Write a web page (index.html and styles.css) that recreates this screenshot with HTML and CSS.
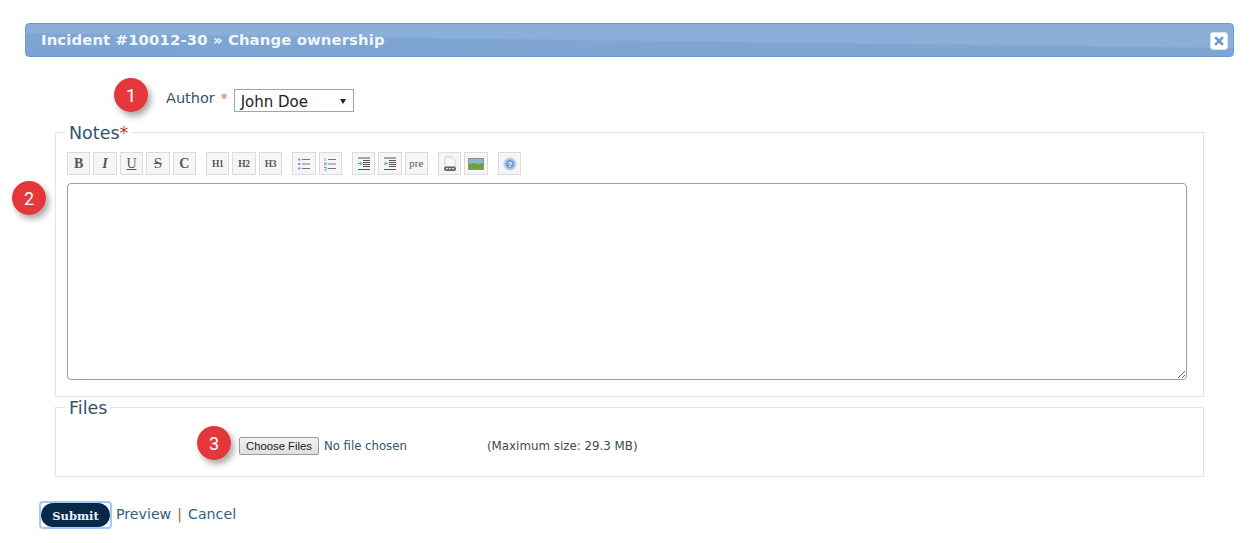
FILE: index.html
```html
<!DOCTYPE html>
<html lang="en">
<head>
<meta charset="utf-8">
<title>Change ownership</title>
<link rel="stylesheet" href="styles.css">
</head>
<body>
<main class="page">
  <header class="titlebar">
    <h1 class="title">Incident #10012-30 » Change ownership</h1>
    <button class="close" aria-label="Close">
      <svg width="10" height="10" viewBox="0 0 10 10"><path d="M2 2l6 6M8 2l-6 6" stroke="#6d9bd0" stroke-width="2.6" stroke-linecap="square"/></svg>
    </button>
  </header>

  <div class="author-row">
    <span class="badge badge-1">1</span>
    <label class="author-label">Author <span class="req-light">*</span></label>
    <div class="select"><span>John Doe</span><i class="caret"></i></div>
  </div>

  <fieldset class="box notes">
    <legend class="legend">Notes<span class="req">*</span></legend>
    <span class="badge badge-2">2</span>
    <div class="toolbar">
      <div class="tgroup">
        <button class="tool serif-b">B</button>
        <button class="tool serif-i">I</button>
        <button class="tool serif-u">U</button>
        <button class="tool serif-s">S</button>
        <button class="tool serif-b">C</button>
      </div>
      <div class="tgroup">
        <button class="tool small">H1</button>
        <button class="tool small">H2</button>
        <button class="tool small">H3</button>
      </div>
      <div class="tgroup">
        <button class="tool"><svg width="14" height="14" viewBox="0 0 14 14"><path d="M5 2.500h8M5 7h8M5 11.500h8" stroke="#777" stroke-width="1.200"/><path d="M1 1.500h2.500v2H1zM1 6h2.500v2H1zM1 10.500h2.500v2H1z" fill="#6fa3e0"/></svg></button>
        <button class="tool"><svg width="14" height="14" viewBox="0 0 14 14"><path d="M5 2.500h8M5 7h8M5 11.500h8" stroke="#777" stroke-width="1.200"/><path d="M2 1v3M1 6h2.500v1H1.500v1h2M1 10.500h2.500v2.500H1" stroke="#6fa3e0" fill="none"/></svg></button>
      </div>
      <div class="tgroup">
        <button class="tool"><svg width="12" height="14" viewBox="0 0 12 14"><path d="M0 1h12M5 3.500h7M5 5.500h7M5 7.500h7M5 9.500h7M0 12.500h12" stroke="#555" stroke-width="1.200"/><path d="M0 6.500h3M2 4.500l2 2-2 2" stroke="#3d9bd9" fill="none"/></svg></button>
        <button class="tool"><svg width="12" height="14" viewBox="0 0 12 14"><path d="M0 1h12M5 3.500h7M5 5.500h7M5 7.500h7M5 9.500h7M0 12.500h12" stroke="#555" stroke-width="1.200"/><path d="M4 6.500H1M2 4.500l-2 2 2 2" stroke="#3d9bd9" fill="none"/></svg></button>
        <button class="tool small pre">pre</button>
      </div>
      <div class="tgroup">
        <button class="tool"><svg width="14" height="16" viewBox="0 0 14 16"><path d="M2 1h7l3 3v7H2z" fill="#f7f7f7" stroke="#cfcfcf"/><rect x="1" y="10.500" width="12" height="4.500" rx="2" fill="#666"/><path d="M3 12.700h8" stroke="#ddd" stroke-width="1.200" stroke-dasharray="2 1"/></svg></button>
        <button class="tool"><svg width="16" height="12" viewBox="0 0 16 12"><rect x="0.500" y="0.500" width="15" height="11" fill="#8fb6d6" stroke="#8a8f94"/><path d="M1 6l5-1 4 1 5-1v6H1z" fill="#6aa52f"/></svg></button>
      </div>
      <div class="tgroup">
        <button class="tool"><svg width="14" height="14" viewBox="0 0 16 16"><circle cx="8" cy="8" r="7" fill="#a9c5e6" stroke="#c4d7ee"/><circle cx="8" cy="8" r="4.500" fill="#6f9bd0"/><text x="8" y="11" text-anchor="middle" class="help-q">?</text></svg></button>
      </div>
    </div>
    <textarea class="notes-area"></textarea>
  </fieldset>

  <fieldset class="box files">
    <legend class="legend">Files</legend>
    <div class="file-row">
      <span class="badge badge-3">3</span>
      <button class="choose">Choose Files</button>
      <span class="nofile">No file chosen</span>
      <span class="maxsize">(Maximum size: 29.3 MB)</span>
    </div>
  </fieldset>

  <div class="actions">
    <div class="submit-focus"><button class="submit">Submit</button></div>
    <a class="link" href="#">Preview</a>
    <span class="sep">|</span>
    <a class="link" href="#">Cancel</a>
  </div>
</main>
</body>
</html>
```

FILE: styles.css
```css
* { box-sizing: border-box; }
html, body { margin: 0; padding: 0; background: #fff; }
body { font-family: "DejaVu Sans", Verdana, sans-serif; color: #2f4f67; overflow: hidden; }
.page { position: relative; width: 1260px; height: 543px; padding: 23px 26px 0 25px; }

.titlebar {
  height: 34px; display: flex; align-items: center; justify-content: space-between;
  padding: 0 5px 0 15px; border: 1px solid #6f9cce; border-radius: 4px;
  background: linear-gradient(180.7deg, #8bafd9 0%, #8bafd9 49%, #7fa6d3 53%, #7ba3d1 100%);
}
.title { margin: 0 0 2px; font-size: 14.8px; font-weight: 700; color: #f2f6fb; letter-spacing: 0.15px; }
.close {
  width: 18px; height: 18px; padding: 0; display: flex; align-items: center; justify-content: center;
  background: #fff; border: 1px solid #d5e0ee; border-radius: 3px; margin-top: 1px;
}

.badge {
  position: absolute; width: 34px; height: 34px; border-radius: 50%;
  display: flex; align-items: center; justify-content: center;
  font: 18px "Roboto", "Liberation Sans", sans-serif; color: #fff;
  background: radial-gradient(circle at 50% 55%, #e43a3e 0%, #e3363a 70%, #f8141c 100%);
  box-shadow: 3px 4px 6px rgba(0,0,0,.35);
}
.badge-1 { left: 114px; top: 78px; }
.badge-2 { left: 12px; top: 181px; }
.badge-3 { left: 197px; top: 426px; }

.author-row { height: 75px; padding: 32px 0 0 141px; display: flex; align-items: flex-start; }
.author-label { font-size: 14.5px; color: #34536b; padding-top: 1px; margin-right: 6px; white-space: nowrap; }
.req-light { color: #e5754a; margin-left: 1px; }
.select {
  width: 120px; height: 23px; padding: 3px 6px 1px; display: flex; align-items: center; justify-content: space-between;
  border: 1px solid #8fa9c4; font-size: 15px; color: #222; background: #fff;
}
.caret { width: 0; height: 0; border: 3px solid transparent; border-top: 5px solid #222; border-bottom: 0; margin-right: 1px; }

.box { margin: 0 30px 0 30px; padding: 0; border: 1px solid #e4e4e4; min-width: 0; }
.legend { margin-left: 10px; padding: 2px 3px 0; font-size: 17.5px; line-height: 17px; color: #34536b; }
.req { color: #c0392b; }
.notes { height: 274px; padding-top: 10px; margin-top: -9px; }
.files { height: 79px; margin-top: 1px; }

.toolbar { display: flex; gap: 10px; height: 23px; margin-left: 11px; }
.tgroup { display: flex; gap: 3px; }
.tool {
  width: 23.4px; height: 23px; padding: 0; display: flex; align-items: center; justify-content: center;
  background: #f6f6f6; border: 1px solid #dcdcdc; color: #555;
  font: 700 14px "Liberation Serif", serif;
}
.serif-i { font-style: italic; }
.serif-u { font-weight: 400; text-decoration: underline; }
.serif-s { font-weight: 400; text-decoration: line-through; font-size: 15px; }
.small { font-size: 9.500px; letter-spacing: -0.3px; }
.pre { font-size: 10.500px; font-weight: 400; letter-spacing: 0.3px; }
.help-q { font: 700 9px "Liberation Sans", sans-serif; fill: #fff; }

.notes-area {
  display: block; width: 1120px; height: 197px; margin: 8px 0 0 11px; padding: 4px;
  border: 1px solid #8aa5bd; border-radius: 4px; background: #fff; resize: both; outline: 0;
}

.file-row { display: flex; align-items: center; height: 44px; padding: 0 0 0 183px; font-size: 11.7px; color: #34536b; margin-top: 7px; }
.choose {
  width: 80px; height: 18px; padding: 0; border: 1px solid #9a9a9a; border-radius: 2px;
  background: linear-gradient(#f3f3f3, #dedede); font: 11.3px "Liberation Sans", sans-serif; color: #222;
}
.nofile { margin-left: 5px; width: 163px; }
.maxsize { white-space: nowrap; color: #3a4a55; font-size: 11.85px; }

.actions { display: flex; align-items: center; margin-top: 24px; margin-left: 14px; font-size: 14.2px; }
.submit-focus { width: 73px; height: 28px; padding: 0; border: 2px solid #a5c9f3; border-radius: 4px; margin-right: 4px; }
.submit {
  display: block; width: 100%; height: 100%; padding: 2px 0 0; border-radius: 12px; border: 0; background: #082a48;
  color: #eef2f6; font: 700 11.5px "DejaVu Serif", serif; outline: 0;
}
.link, .sep { margin-bottom: 2px; }
.link { color: #2f5f85; text-decoration: none; }
.sep { color: #b5651d; margin-left: 6px; margin-right: 6px; }
```
